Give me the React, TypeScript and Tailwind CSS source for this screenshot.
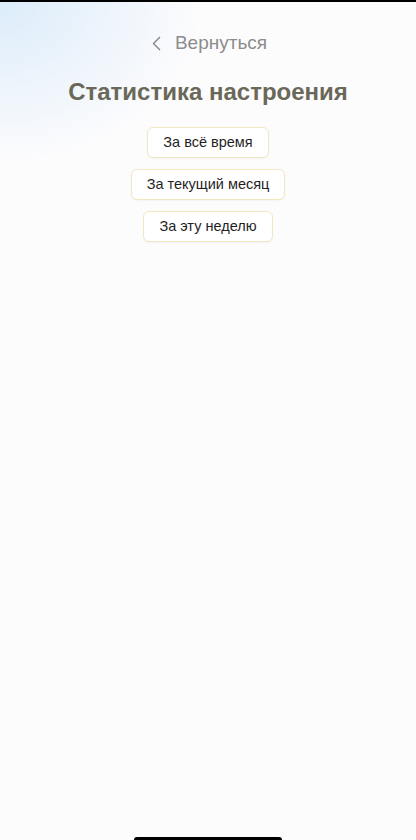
const PERIODS = ['За всё время', 'За текущий месяц', 'За эту неделю'];

export default function App() {
  return (
    <div
      className="relative w-[416px] h-[840px] overflow-hidden bg-[#fdfcfd] flex flex-col items-center"
      style={{ fontFamily: '"Liberation Sans", Arial, sans-serif' }}
    >
      {/* soft blue glow in the top-left corner */}
      <div className="absolute inset-0 bg-[radial-gradient(ellipse_50%_20%_at_0%_0%,#dcecfa,rgba(253,252,253,0))] pointer-events-none" />
      <div className="absolute top-0 left-0 right-0 h-[2px] bg-black" />

      <div className="relative flex flex-col items-center w-full">
        <button className="mt-[31px] ml-[3px] flex items-center gap-[14px] text-[#8c8c8c] text-[19px] leading-[24px]">
          <svg width="9" height="15" viewBox="0 0 9 15" fill="none">
            <polyline points="8,1 1.5,7.5 8,14" stroke="#7f8088" strokeWidth="1.3" />
          </svg>
          <span>Вернуться</span>
        </button>

        <h1 className="mt-[22px] text-[24px] leading-[30px] font-bold text-[#6a6858]">
          Статистика настроения
        </h1>

        <div className="mt-[20px] flex flex-col items-center gap-[11px]">
          {PERIODS.map((p) => (
            <button
              key={p}
              className="h-[31px] px-[15px] rounded-[6px] border border-[#f1e8c0] bg-white text-[14.5px] text-[#1f1f1f] shadow-[0_1px_2px_rgba(0,0,0,0.04)]"
            >
              {p}
            </button>
          ))}
        </div>
      </div>

      <div className="absolute bottom-0 left-[134px] w-[148px] h-[3px] rounded-t-full bg-black" />
    </div>
  );
}
